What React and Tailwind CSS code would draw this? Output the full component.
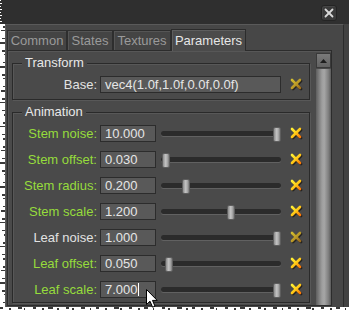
import React from "react";

const rows = [
  { label: "Stem noise:", value: "10.000", pos: 112, mod: true },
  { label: "Stem offset:", value: "0.030", pos: 1, mod: true },
  { label: "Stem radius:", value: "0.200", pos: 21, mod: true },
  { label: "Stem scale:", value: "1.200", pos: 66, mod: true },
  { label: "Leaf noise:", value: "1.000", pos: 112, mod: false },
  { label: "Leaf offset:", value: "0.050", pos: 4, mod: true },
  { label: "Leaf scale:", value: "7.000", pos: 112, mod: true, caret: true },
];

function ResetX({ dim }) {
  const id = dim ? "gradDim" : "gradBright";
  return (
    <svg width="13" height="13" viewBox="0 0 13 13" className="block">
      <defs>
        <linearGradient id={id} gradientUnits="userSpaceOnUse" x1="1" y1="1" x2="10" y2="10">
          <stop offset="0" stopColor={dim ? "#d6c232" : "#fff43c"} />
          <stop offset="0.5" stopColor={dim ? "#bfa028" : "#ffd21a"} />
          <stop offset="1" stopColor={dim ? "#9c6c1c" : "#ff7a06"} />
        </linearGradient>
      </defs>
      <g stroke="#161616" strokeOpacity="0.75" strokeWidth="2.8" strokeLinecap="round">
        <line x1="3" y1="3" x2="11" y2="11" />
        <line x1="11" y1="3" x2="3" y2="11" />
      </g>
      <g stroke={`url(#${id})`} strokeWidth="2.6" strokeLinecap="round">
        <line x1="2" y1="2" x2="10" y2="10" />
        <line x1="10" y1="2" x2="2" y2="10" />
      </g>
    </svg>
  );
}

function Slider({ pos }) {
  return (
    <div className="relative ml-[5px] flex h-[17px] w-[120px] items-center">
      <div className="h-[5px] w-full rounded-full bg-[#2b2b2b] shadow-[0_1px_0_#616161]" />
      <div
        className="absolute top-[2px] h-[15px] w-[8px] rounded-[2px] border border-[#5e5e5e] bg-[linear-gradient(to_right,#8c8c8c,#c4c4c4_45%,#a4a4a4_75%,#7a7a7a)]"
        style={{ left: pos }}
      />
    </div>
  );
}

function Tab({ label, w, active }) {
  if (active) {
    return (
      <div
        className={`relative z-10 -mb-[1px] flex h-[22px] items-center justify-center border border-b-0 border-[#2c2c2c] bg-[#4b4b4b] text-[#e6e6e6] shadow-[inset_1px_1px_0_#5e5e5e] ${w}`}
      >
        {label}
      </div>
    );
  }
  return (
    <div
      className={`flex h-[20px] items-center justify-center border border-b-0 border-[#2e2e2e] bg-[#444444] text-[#9a9a9a] shadow-[inset_1px_1px_0_#555555] ${w}`}
    >
      {label}
    </div>
  );
}

function Group({ title, children, className = "" }) {
  return (
    <div
      className={`relative w-[298px] border border-[#2a2a2a] shadow-[inset_1px_1px_0_#585858,1px_1px_0_#585858] ${className}`}
    >
      <div className="absolute left-[9px] top-[-9px] bg-[#4a4a4a] px-[3px] leading-[15px] text-[#e8e8e8]">
        {title}
      </div>
      {children}
    </div>
  );
}

const leftDashes = [2, 4, 1, 3, 5, 2, 3, 1, 4, 2, 5, 1, 3, 2, 4];
const bottomDashes = [3, 2, 4, 1, 3, 2, 5, 2];

export default function App() {
  return (
    <div className="relative h-[312px] w-[349px] overflow-hidden bg-white font-['Liberation_Sans',Arial,sans-serif] text-[13px] leading-[15px]">
      {/* title bar */}
      <div className="flex h-[24px] justify-end bg-[#2f2f2f] pr-[12px] pt-[5px]">
        <div className="flex h-[16px] w-[16px] items-center justify-center rounded-[3px] border border-[#242424] bg-[#3a3a3a] shadow-[inset_1px_1px_0_#454545]">
          <svg width="10" height="10" viewBox="0 0 10 10">
            <g stroke="#d9d9d9" strokeWidth="1.8" strokeLinecap="round">
              <line x1="1.5" y1="1.5" x2="8.5" y2="8.5" />
              <line x1="8.5" y1="1.5" x2="1.5" y2="8.5" />
            </g>
          </svg>
        </div>
      </div>

      {/* window body */}
      <div className="ml-[5px] flex h-[283px]">
        <div className="flex w-[339px] flex-col border-l border-r border-t border-l-[#5c5c5c] border-r-[#2c2c2c] border-t-[#5a5a5a] bg-[#474747]">
          {/* tabs */}
          <div className="flex h-[25px] items-end pl-[1px] pt-[4px]">
            <Tab label="Common" w="w-[60px]" />
            <Tab label="States" w="w-[46px]" />
            <Tab label="Textures" w="w-[58px]" />
            <Tab label="Parameters" w="w-[75px]" active />
          </div>
          {/* panel */}
          <div className="ml-[1px] flex h-[256px] w-[325px] border border-[#2c2c2c] bg-[#4a4a4a] shadow-[inset_1px_1px_0_#575757]">
            <div className="flex w-[308px] flex-col pl-[4px] pt-[12px]">
              <Group title="Transform">
                <div className="flex items-center pb-[6px] pt-[12px]">
                  <div className="w-[84px] text-right text-[#e2e2e2]">Base:</div>
                  <div className="ml-[3px] flex h-[17px] w-[181px] items-center border border-[#2c2c2c] bg-[#595959] pl-[4px] text-[#e6e6e6]">
                    vec4(1.0f,1.0f,0.0f,0.0f)
                  </div>
                  <div className="ml-[9px]">
                    <ResetX dim />
                  </div>
                </div>
              </Group>
              <Group title="Animation" className="mt-[12px]">
                <div className="flex flex-col gap-[9px] pb-[4px] pt-[12px]">
                  {rows.map((r) => (
                    <div key={r.label} className="flex h-[17px] items-center">
                      <div
                        className={`w-[84px] text-right ${r.mod ? "text-[#96dc3c]" : "text-[#e2e2e2]"}`}
                      >
                        {r.label}
                      </div>
                      <div className="ml-[3px] flex h-[17px] w-[56px] items-center border border-[#2c2c2c] bg-[#595959] pl-[4px] text-[#e6e6e6]">
                        {r.value}
                        {r.caret && <span className="inline-block h-[13px] w-[1px] bg-white" />}
                      </div>
                      <Slider pos={r.pos} />
                      <div className="ml-[9px]">
                        <ResetX dim={!r.mod} />
                      </div>
                    </div>
                  ))}
                </div>
              </Group>
            </div>
            {/* scrollbar */}
            <div className="flex w-[15px] flex-col pt-[2px]">
              <div className="flex h-[15px] items-center justify-center border border-[#3a3a3a] bg-[linear-gradient(to_bottom,#7a7a7a,#626262)]">
                <svg width="7" height="4" viewBox="0 0 7 4">
                  <polygon points="3.5,0 7,4 0,4" fill="#1e1e1e" />
                </svg>
              </div>
              <div className="mt-[1px] flex-1 bg-[linear-gradient(to_right,#5e5e5e,#9e9e9e_40%,#a6a6a6_55%,#7c7c7c_85%,#5a5a5a)]" />
            </div>
          </div>
        </div>
        <div className="flex-1 bg-[#424242]" />
      </div>

      {/* torn edges */}
      <svg className="pointer-events-none absolute left-0 top-0" width="349" height="312">
        {Array.from({ length: 8 }).map((_, i) => (
          <rect key={"t" + i} x="0" y={i * 3} width={i % 2 ? 2 : 1} height="1" fill="#ffffff" />
        ))}
        {Array.from({ length: 70 }).map((_, i) => {
          const len = leftDashes[i % leftDashes.length];
          return i % 3 === 2 ? null : (
            <rect key={"l" + i} x={5 - len} y={26 + i * 4} width={len} height={i % 2 ? 1 : 2} fill="#3a3a3a" />
          );
        })}
        {Array.from({ length: 45 }).map((_, i) => {
          const w = bottomDashes[i % bottomDashes.length];
          return (
            <rect key={"b" + i} x={i * 8 + (i % 3)} y={i % 2 ? 308 : 307} width={w} height="2" fill="#3a3a3a" />
          );
        })}
      </svg>

      {/* mouse cursor */}
      <svg className="pointer-events-none absolute left-[146px] top-[289px]" width="13" height="20" viewBox="0 0 13 20">
        <path
          d="M0.5 0.5 L0.5 15.5 L4 12.2 L6.6 18.2 L9 17.2 L6.5 11.4 L11.2 11.4 Z"
          fill="#ffffff"
          stroke="#000000"
          strokeWidth="1"
          strokeLinejoin="round"
        />
      </svg>
    </div>
  );
}
